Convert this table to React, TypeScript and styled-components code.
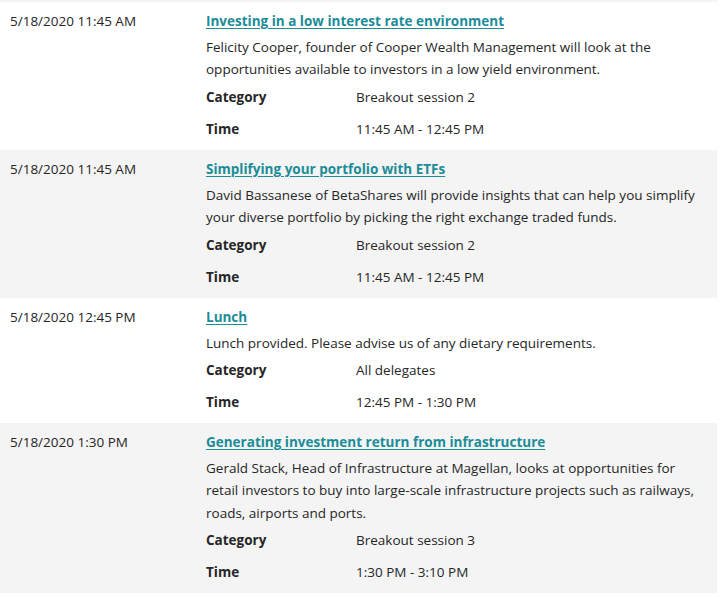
import React from "react";
import styled, { createGlobalStyle } from "styled-components";

const GlobalStyle = createGlobalStyle`
  html, body { margin: 0; padding: 0; background: #ffffff; }
  body {
    font-family: "Open Sans", "Noto Sans", sans-serif;
    font-size: 13.5px;
    color: #262626;
  }
`;

type Session = {
  date: string;
  title: string;
  description: string;
  category: string;
  time: string;
};

const sessions: Session[] = [
  {
    date: "5/18/2020 11:45 AM",
    title: "Investing in a low interest rate environment",
    description:
      "Felicity Cooper, founder of Cooper Wealth Management will look at the opportunities available to investors in a low yield environment.",
    category: "Breakout session 2",
    time: "11:45 AM - 12:45 PM",
  },
  {
    date: "5/18/2020 11:45 AM",
    title: "Simplifying your portfolio with ETFs",
    description:
      "David Bassanese of BetaShares will provide insights that can help you simplify your diverse portfolio by picking the right exchange traded funds.",
    category: "Breakout session 2",
    time: "11:45 AM - 12:45 PM",
  },
  {
    date: "5/18/2020 12:45 PM",
    title: "Lunch",
    description: "Lunch provided. Please advise us of any dietary requirements.",
    category: "All delegates",
    time: "12:45 PM - 1:30 PM",
  },
  {
    date: "5/18/2020 1:30 PM",
    title: "Generating investment return from infrastructure",
    description:
      "Gerald Stack, Head of Infrastructure at Magellan, looks at opportunities for retail investors to buy into large-scale infrastructure projects such as railways, roads, airports and ports.",
    category: "Breakout session 3",
    time: "1:30 PM - 3:10 PM",
  },
];

const Agenda = styled.div`
  width: 717px;
  border-top: 2px solid #f4f4f4;
`;

const Row = styled.div<{ $shaded: boolean }>`
  display: grid;
  grid-template-columns: 196px 1fr;
  background: ${(p) => (p.$shaded ? "#f4f4f4" : "#ffffff")};
  padding: 8px 0 5px;
`;

const DateCell = styled.div`
  padding: 0 10px;
  line-height: 22px;
`;

const Content = styled.div`
  padding: 0 10px;
`;

const Title = styled.a`
  display: block;
  font-weight: 700;
  line-height: 22px;
  color: #1b8c98;
  text-decoration: underline;
  text-underline-offset: 2px;
  margin-bottom: 4px;
`;

const Description = styled.p`
  margin: 0;
  line-height: 22.4px;
`;

const Details = styled.div`
  display: grid;
  grid-template-columns: 150px 1fr;
  grid-auto-rows: 32px;
  align-items: center;
`;

const Label = styled.div`
  font-weight: 700;
`;

const Value = styled.div``;

export default function App() {
  return (
    <>
      <GlobalStyle />
      <Agenda>
        {sessions.map((s, i) => (
          <Row key={i} $shaded={i % 2 === 1}>
            <DateCell>{s.date}</DateCell>
            <Content>
              <Title href="#">{s.title}</Title>
              <Description>{s.description}</Description>
              <Details>
                <Label>Category</Label>
                <Value>{s.category}</Value>
                <Label>Time</Label>
                <Value>{s.time}</Value>
              </Details>
            </Content>
          </Row>
        ))}
      </Agenda>
    </>
  );
}
